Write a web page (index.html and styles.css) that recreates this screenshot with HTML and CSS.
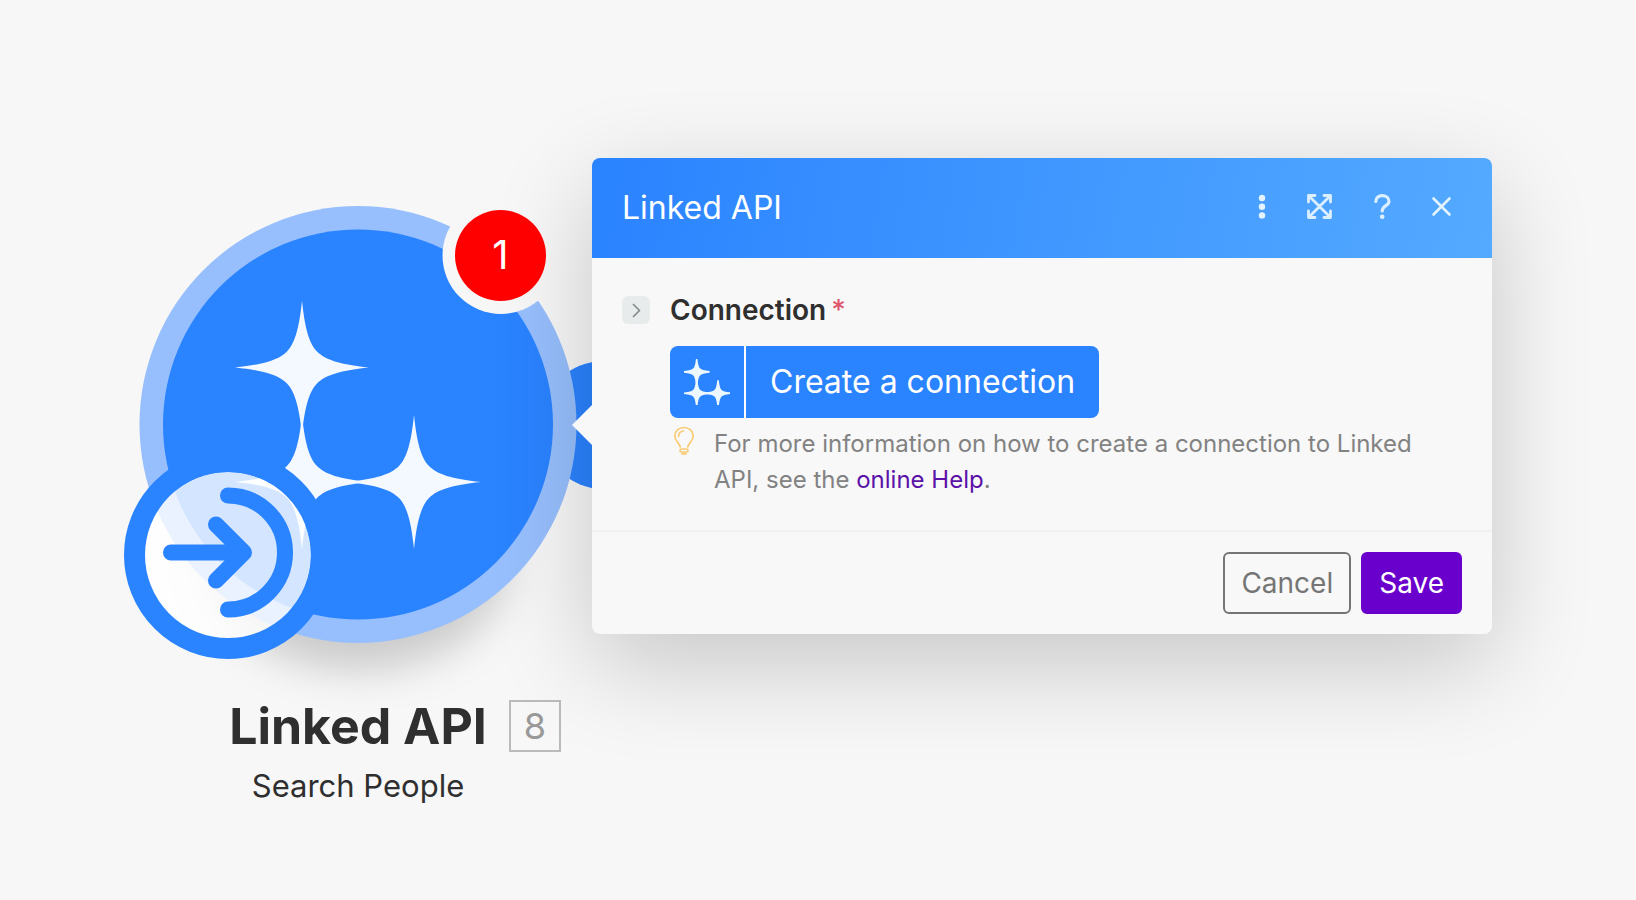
FILE: index.html
```html
<!DOCTYPE html>
<html lang="en">
<head>
<meta charset="utf-8">
<title>Linked API</title>
<link rel="stylesheet" href="styles.css">
</head>
<body>
<main class="stage">
  <section class="node">
    <div class="node-art">
      <svg class="node-svg" viewBox="124 206 468 454" aria-hidden="true">
        <defs>
          <path id="spark" d="M0-67C3-37 8-23 15-16C23-8 37-3 67 0C37 3 23 8 15 16C8 23 3 37 0 67C-3 37-8 23-15 16C-23 8-37 3-67 0C-37-3-23-8-15-16C-8-23-3-37 0-67Z"/>
        </defs>
        <circle cx="604" cy="425" r="64" fill="#2a83ff"/>
        <ellipse class="ground" cx="358" cy="560" rx="150" ry="110"/>
        <circle cx="358" cy="424.500" r="218.500" fill="#97bffd"/>
        <circle cx="358" cy="424.500" r="195" fill="#2a83ff"/>
        <g fill="#f4f9ff">
          <use href="#spark" x="302" y="367.500"/>
          <use href="#spark" x="302" y="482"/>
          <use href="#spark" x="414" y="482"/>
        </g>
        <circle cx="228" cy="555" r="83" fill="#fff" fill-opacity=".8"/>
        <circle cx="228" cy="555" r="93.500" fill="none" stroke="#2a83ff" stroke-width="21"/>
        <g fill="none" stroke="#2a83ff" stroke-width="16" stroke-linecap="round" stroke-linejoin="round">
          <path d="M228 495.500a57 57 0 0 1 0 114"/>
          <path d="M171 552.500H240M216 524.500l28 28l-28 28"/>
        </g>
        <path d="M228 540l16 12l-16 12z" fill="#2a83ff"/>
        <circle cx="501" cy="255.500" r="58.500" fill="#f7f7f7"/>
      </svg>
      <span class="badge">1</span>
    </div>
    <div class="caption">
      <h2 class="caption-title">Linked API<span class="caption-id">8</span></h2>
      <p class="caption-sub">Search People</p>
    </div>
  </section>

  <section class="panel" aria-labelledby="panel-title">
    <header class="panel-head">
      <h1 class="panel-title" id="panel-title">Linked API</h1>
      <div class="tools">
        <button class="tool" type="button" aria-label="More">
          <svg viewBox="0 0 28 28"><g fill="#e3f3ff"><circle cx="14" cy="4" r="3.200"/><circle cx="14" cy="12.700" r="3.200"/><circle cx="14" cy="21.400" r="3.200"/></g></svg>
        </button>
        <button class="tool" type="button" aria-label="Expand">
          <svg viewBox="0 0 28 28"><path d="M1.500 2.500L21.500 22.500M21.500 2.500L1.500 22.500M.500 8V1.500H7M16 1.500H22.500V8M22.500 17V23.500H16M7 23.500H.500V17" fill="none" stroke="#dcefff" stroke-width="2.800" stroke-linecap="round" stroke-linejoin="round"/></svg>
        </button>
        <button class="tool" type="button" aria-label="Help">
          <svg viewBox="0 0 28 28"><path d="M7.800 7.500C7.800 3.800 10.500 1.700 14.200 1.700S21 4 21 7.500C21 11.800 14.200 11.700 14.200 17" fill="none" stroke="#dcefff" stroke-width="3.200" stroke-linecap="round"/><circle cx="14.200" cy="22.800" r="2.300" fill="#dcefff"/></svg>
        </button>
        <button class="tool" type="button" aria-label="Close">
          <svg viewBox="0 0 28 28"><path d="M5.500 4.500L21.500 20.500M21.500 4.500L5.500 20.500" fill="none" stroke="#e3f3ff" stroke-width="2.600" stroke-linecap="round"/></svg>
        </button>
      </div>
    </header>
    <div class="panel-body">
      <button class="toggle" type="button" aria-label="Toggle field">
        <svg viewBox="0 0 28 28"><path d="M11 8L17.500 14.500L11 21" fill="none" stroke="#7f8789" stroke-width="1.500"/></svg>
      </button>
      <div class="field">
        <div class="field-label">Connection<span class="required">*</span></div>
        <button class="create" type="button">
          <span class="create-icon">
            <svg viewBox="235 300 246 250" aria-hidden="true"><g fill="#eef8ff" stroke="#eef8ff" stroke-width="9" stroke-linejoin="round"><use href="#spark" x="302" y="370"/><use href="#spark" x="302" y="486"/><use href="#spark" x="418" y="486"/></g></svg>
          </span>
          <span class="create-text">Create a connection</span>
        </button>
        <div class="hint">
          <svg class="bulb" viewBox="0 0 28 32" aria-hidden="true"><g fill="none" stroke="#f8ca73" stroke-width="1.700" stroke-linecap="round" stroke-linejoin="round"><path d="M10.300 21C9.500 17 4.800 15 4.800 10C4.800 5 8.800 1.500 14 1.500S23.200 5 23.200 10C23.200 15 18.500 17 17.700 21"/><path d="M8.500 10.500C8.500 7.500 10.500 5.500 13.500 5"/><rect x="10" y="23" width="8" height="3" rx="1.500"/><path d="M12 27.800H16"/></g></svg>
          <p class="hint-text">For more information on how to create a connection to Linked API, see the <a class="link" href="#help">online Help</a>.</p>
        </div>
      </div>
    </div>
    <footer class="panel-foot">
      <button class="btn" type="button">Cancel</button>
      <button class="btn btn-primary" type="button">Save</button>
    </footer>
  </section>
</main>
</body>
</html>
```
FILE: styles.css
```css
* { box-sizing: border-box; }
body {
  margin: 0;
  background: #f7f7f7;
  color: #2f2f2f;
  font-family: Inter, "Liberation Sans", sans-serif;
}
h1, h2, p { margin: 0; }
button { font-family: inherit; padding: 0; border: 0; background: none; cursor: pointer; }

.stage {
  display: flex;
  align-items: flex-start;
  min-height: 100vh;
  padding: 158px 144px 40px 124px;
}

.node { flex: none; width: 468px; padding-top: 48px; }
.node-art { position: relative; }
.node-svg { display: block; width: 100%; overflow: visible; }
.ground { fill: #000; fill-opacity: .18; filter: blur(20px); }
.badge {
  position: absolute;
  z-index: 2;
  top: 4px;
  right: 46px;
  width: 91px;
  height: 91px;
  border-radius: 50%;
  background: #f00;
  color: #fff;
  font-size: 40px;
  line-height: 90px;
  text-align: center;
}
.caption { margin-top: 34px; text-align: center; }
.caption-title {
  position: relative;
  width: max-content;
  margin: 0 auto;
  font-size: 50px;
  font-weight: 700;
  line-height: 64px;
}
.caption-id {
  position: absolute;
  top: 6px;
  left: 100%;
  width: 52px;
  height: 52px;
  margin-left: 22px;
  border: 2px solid #bbb;
  color: #999;
  font-size: 36px;
  font-weight: 400;
  line-height: 48px;
}
.caption-sub { margin-top: 8px; font-size: 31px; line-height: 40px; }

.panel {
  position: relative;
  z-index: 1;
  flex: 1;
  border-radius: 8px;
  background: #f8f8f8;
  box-shadow: 0 30px 100px rgba(0, 0, 0, .2);
}
.panel::before {
  content: "";
  position: absolute;
  top: 247px;
  left: -20px;
  border: 20px solid transparent;
  border-left: 0;
  border-right-color: #f8f8f8;
}
.panel-head {
  display: flex;
  align-items: center;
  justify-content: space-between;
  height: 100px;
  padding: 0 36px 0 30px;
  border-radius: 8px 8px 0 0;
  background: linear-gradient(100deg, #2a83ff, #54aaff);
  color: #fff;
}
.panel-title { font-size: 32px; font-weight: 400; line-height: 40px; }
.tools { display: flex; gap: 32px; }
.tool { width: 28px; height: 28px; }
.tool svg, .toggle svg { display: block; width: 28px; height: 28px; overflow: visible; }

.panel-body { display: flex; gap: 20px; padding: 32px 30px; border-bottom: 2px solid #f0f0f0; }
.toggle { flex: none; width: 28px; height: 28px; margin-top: 6px; border-radius: 6px; background: #e8ebec; }
.field { flex: 1; }
.field-label { font-size: 28px; font-weight: 600; line-height: 40px; }
.required { margin-left: 5px; color: #e0566b; font-weight: 500; }
.create {
  display: flex;
  height: 72px;
  margin-top: 16px;
  border-radius: 8px;
  background: #2a83ff;
  color: #fff;
}
.create-icon {
  display: flex;
  align-items: center;
  justify-content: center;
  width: 76px;
  height: 72px;
  border-right: 2px solid #fff;
}
.create-icon svg { width: 46px; height: 46px; }
.create-text { padding: 0 24px; font-size: 32px; line-height: 72px; }
.hint { display: flex; gap: 16px; padding-top: 8px; }
.bulb { flex: none; width: 28px; height: 32px; }
.hint-text { color: #828282; font-size: 24px; line-height: 36px; }
.link { color: #5b12a8; text-decoration: none; }

.panel-foot { display: flex; justify-content: flex-end; gap: 10px; padding: 20px 30px; }
.btn {
  height: 62px;
  padding: 0 16px;
  border: 2px solid #757575;
  border-radius: 6px;
  color: #757575;
  font-size: 28px;
}
.btn-primary { border-color: #6a00cb; background: #6a00cb; color: #fff; }
```
